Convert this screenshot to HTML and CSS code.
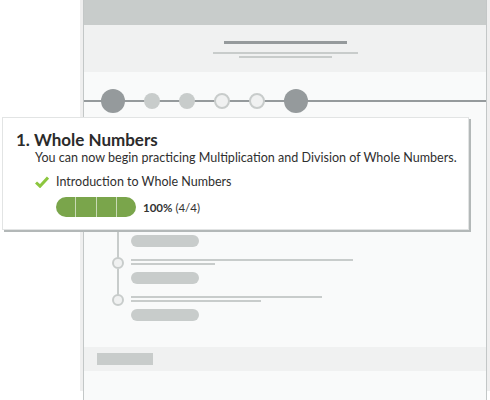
FILE: index.html
```html
<!DOCTYPE html>
<html>
<head>
<meta charset="utf-8">
<link rel="stylesheet" href="styles.css">
</head>
<body>
<div class="stage">
  <div class="sheet">
    <div class="frame">
      <div class="hdr"></div>
      <div class="subhdr">
        <div class="bar-dark"></div>
        <div class="bar-l1"></div>
        <div class="bar-l2"></div>
      </div>
      <div class="steps">
        <span class="dot big"></span>
        <span class="dot fill"></span>
        <span class="dot fill"></span>
        <span class="dot open"></span>
        <span class="dot open"></span>
        <span class="dot big"></span>
      </div>
      <div class="timeline">
        <div class="item">
          <div class="node"><span class="circ"></span><span class="seg"></span></div>
          <div class="content"><div class="ln ln-a1"></div><div class="ln ln-a2"></div><div class="pill"></div></div>
        </div>
        <div class="item">
          <div class="node"><span class="circ"></span><span class="seg"></span></div>
          <div class="content"><div class="ln ln-b1"></div><div class="ln ln-b2"></div><div class="pill"></div></div>
        </div>
        <div class="item">
          <div class="node"><span class="circ"></span></div>
          <div class="content"><div class="ln ln-c1"></div><div class="ln ln-c2"></div><div class="pill"></div></div>
        </div>
      </div>
      <div class="band"><div class="band-rect"></div></div>
    </div>
  </div>

  <div class="popup">
    <div class="title">1. Whole Numbers</div>
    <div class="desc">You can now begin practicing Multiplication and Division of Whole Numbers.</div>
    <div class="check-row">
      <svg class="check" width="14" height="12" viewBox="0 0 14 12"><path d="M1 6.5 L5 10.2 L13 1.5" fill="none" stroke="#8cc63e" stroke-width="3" stroke-linejoin="miter"/></svg>
      <span>Introduction to Whole Numbers</span>
    </div>
    <div class="prog-row">
      <div class="prog"><span></span><span></span><span></span><span></span></div>
      <span class="pct"><b>100%</b> (4/4)</span>
    </div>
  </div>
</div>
</body>
</html>
```

FILE: styles.css
```css
html, body { margin: 0; padding: 0; background: #fff; }
.stage {
  position: relative;
  width: 490px;
  height: 400px;
  overflow: hidden;
  padding-left: 80px;
  box-sizing: border-box;
  font-family: Lato, "Open Sans", sans-serif;
  color: #333;
}
.sheet {
  margin-top: 9px;
  height: 391px;
  background: #efefef;
}
.frame {
  margin: -9px 3px 0 3px;
  height: 400px;
  background: #f9fafa;
  border-left: 1px solid #c3c7c7;
  border-right: 1px solid #c3c7c7;
  display: flex;
  flex-direction: column;
}
.hdr { height: 25px; background: #c8cccb; flex: none; }
.subhdr {
  height: 47px;
  flex: none;
  background: #f0f1f1;
  display: flex;
  flex-direction: column;
  align-items: center;
}
.bar-dark { width: 123px; height: 3px; background: #959a9c; margin-top: 16px; }
.bar-l1 { width: 145px; height: 2px; background: #c8cccb; margin-top: 8px; }
.bar-l2 { width: 93px; height: 2px; background: #c8cccb; margin-top: 2px; }

.steps {
  margin-top: 17px;
  height: 24px;
  padding-left: 17px;
  display: flex;
  align-items: center;
  gap: 19px;
  background: linear-gradient(#959a9c, #959a9c) 0 11px / 100% 2px no-repeat;
  flex: none;
}
.dot { display: block; border-radius: 50%; box-sizing: border-box; }
.dot.big { width: 24px; height: 24px; background: #959a9c; }
.dot.fill { width: 16px; height: 16px; background: #c8cccb; }
.dot.open { width: 16px; height: 16px; background: #f0f1f1; border: 2px solid #c8cccb; }

.timeline { margin-top: 108px; margin-left: 28px; flex: none; }
.item { display: flex; gap: 7px; height: 37px; }
.node { width: 12px; display: flex; flex-direction: column; align-items: center; }
.circ {
  display: block;
  width: 12px; height: 12px;
  box-sizing: border-box;
  border-radius: 50%;
  background: #f0f1f1;
  border: 2px solid #c8cccb;
  margin-top: -1px;
  flex: none;
}
.seg { display: block; width: 2px; flex: 1; background: #c8cccb; }
.content { display: flex; flex-direction: column; }
.ln { height: 2px; background: #c8cccb; margin-top: 2px; }
.ln-a1, .ln-b1, .ln-c1 { margin-top: 1px; }
.ln-a1 { width: 222px; } .ln-a2 { width: 84px; }
.ln-b1 { width: 222px; } .ln-b2 { width: 84px; }
.ln-c1 { width: 191px; } .ln-c2 { width: 130px; }
.pill { width: 68px; height: 12px; border-radius: 6px; background: #c8cccb; margin-top: 7px; }

.band {
  margin-top: 15px;
  height: 24px;
  background: #f0f1f1;
  padding: 6px 0 0 13px;
  box-sizing: border-box;
  flex: none;
}
.band-rect { width: 56px; height: 12px; background: #c8cccb; }

.popup {
  position: absolute;
  left: 2px;
  top: 117px;
  width: 467px;
  height: 113px;
  box-sizing: border-box;
  background: #fff;
  border: 1px solid #e2e4e4;
  box-shadow: 2px 2px 0 #b3b8b8;
  padding: 11px 0 0 13px;
}
.title { font-size: 17px; font-weight: 700; line-height: 21px; color: #2b2b2b; }
.desc { font-size: 12.55px; line-height: 18px; margin-left: 19px; margin-top: -1px; white-space: nowrap; color: #2f2f2f; }
.check-row { display: flex; align-items: center; gap: 7px; margin-left: 19px; margin-top: 7px; font-size: 12.5px; line-height: 16px; color: #2f2f2f; }
.check { display: block; flex: none; }
.prog-row { display: flex; align-items: center; gap: 7px; margin-left: 40px; margin-top: 7px; }
.prog {
  width: 80px; height: 20px;
  border-radius: 10px;
  background: #7aa54b;
  display: flex;
  overflow: hidden;
  flex: none;
}
.prog span { flex: 1; border-left: 1px solid #c9dab6; }
.prog span:first-child { border-left: none; }
.pct { font-size: 11.5px; color: #333; }
.pct b { font-weight: 700; }
```
